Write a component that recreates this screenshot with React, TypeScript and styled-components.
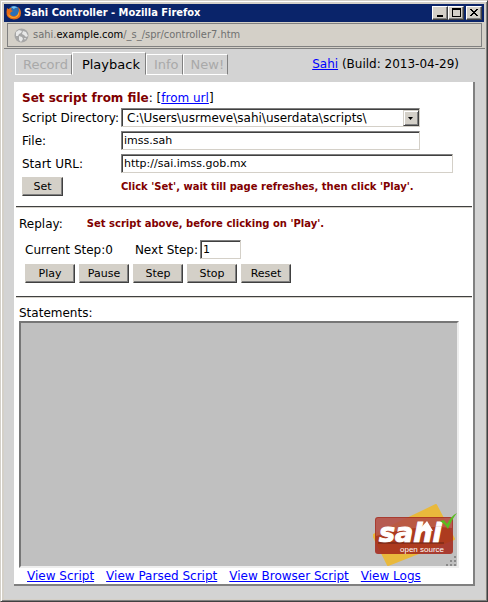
import React from "react";
import styled, { createGlobalStyle } from "styled-components";

const GlobalStyle = createGlobalStyle`
  *, *::before, *::after { box-sizing: border-box; }
  body {
    margin: 0;
    background: #d4d0c8;
    color: #000;
    font: 12px/16px Verdana, "DejaVu Sans", sans-serif;
  }
  button, input, select, textarea { font: inherit; color: inherit; border-radius: 0; }
`;

const WindowFrame = styled.div`
  display: flex;
  flex-direction: column;
  min-height: 100vh;
  padding: 1px;
  background: #d4d0c8;
  border: 1px solid #d4d0c8;
  border-right-color: #404040;
  border-bottom-color: #404040;
  box-shadow: inset 1px 1px #fff, inset -1px -1px #808080;
`;

const TitleBar = styled.header`
  display: flex;
  align-items: center;
  gap: 3px;
  height: 18px;
  margin: 2px 2px 0;
  padding: 0 2px;
  background: #0a246a;
  color: #fff;
`;

const Title = styled.h1`
  flex: 1;
  margin: 0;
  font: bold 11px/18px Tahoma, "DejaVu Sans Condensed", "DejaVu Sans", sans-serif;
  font-stretch: condensed;
  white-space: nowrap;
`;

const WindowButtons = styled.div`
  display: flex;
`;

const WindowButton = styled.button<{ $apart?: boolean }>`
  display: grid;
  place-items: center;
  width: 16px;
  height: 14px;
  margin-left: ${(p) => (p.$apart ? 2 : 0)}px;
  padding: 0;
  background: #d4d0c8;
  border: 1px solid;
  border-color: #fff #404040 #404040 #fff;
  box-shadow: inset -1px -1px #808080;
`;

const AddressBar = styled.div`
  display: flex;
  align-items: center;
  gap: 4px;
  height: 24px;
  margin: 1px 4px 1px 5px;
  padding: 0 6px;
  border: 1px solid #808080;
  color: #707070;
  font: 11px/22px Tahoma, "DejaVu Sans Condensed", "DejaVu Sans", sans-serif;
  font-stretch: condensed;
`;

const Host = styled.span`
  color: #000;
`;

const Page = styled.main`
  display: flex;
  flex: 1;
  flex-direction: column;
  margin: 0 1px 1px 2px;
  padding: 3px 10px 13px;
  background: #d3d3d3;
  border-top: 1px solid #808080;
`;

const TopRow = styled.div`
  display: flex;
  align-items: flex-end;
  justify-content: space-between;
  padding: 0 16px 7px 1px;
`;

const Tabs = styled.nav`
  display: flex;
  align-items: flex-end;
`;

const Tab = styled.button<{ $active?: boolean }>`
  height: ${(p) => (p.$active ? 23 : 21)}px;
  padding: ${(p) => (p.$active ? "2px 5px 0 9px" : "0 3px 0 7px")};
  background: none;
  border: 1px solid #fff;
  border-right-color: #808080;
  border-bottom-color: ${(p) => (p.$active ? "transparent" : "#fff")};
  color: ${(p) => (p.$active ? "#000" : "#a9a9a9")};
  font-size: 13px;
  line-height: 18px;
`;

const Build = styled.p`
  margin: 0 0 1px;
  line-height: 20px;
`;

const Link = styled.a`
  color: #00f;
`;

const Panel = styled.div`
  display: flex;
  flex: 1;
  flex-direction: column;
  padding: 8px 0 0 2px;
  background: #fff;
  border: solid #808080;
  border-width: 0 2px 2px 0;
`;

const ScriptForm = styled.form`
  display: grid;
  grid-template-columns: 99px 1fr;
  row-gap: 4px;
  align-items: center;
  padding: 0 20px 10px 6px;
`;

const Heading = styled.div`
  grid-column: 1 / -1;
  height: 14px;
  line-height: 16px;
`;

const Warning = styled.strong`
  color: #800000;
`;

const Notice = styled.p`
  margin: 0;
  color: #800000;
  font-size: 10px;
  font-weight: bold;
`;

const Field = styled.input<{ $width: string }>`
  width: ${(p) => p.$width};
  height: 19px;
  padding: 0 2px;
  background: #fff;
  border: 1px solid;
  border-color: #808080 #d4d0c8 #d4d0c8 #808080;
  box-shadow: inset 1px 1px #404040;
  font-size: 11px;
  outline: none;
`;

const SelectBox = styled.div`
  position: relative;
  width: 90%;
`;

const Select = styled.select`
  display: block;
  appearance: none;
  width: 100%;
  height: 19px;
  padding: 0 18px 0 5px;
  background: #fff;
  border: 1px solid;
  border-color: #808080 #d4d0c8 #d4d0c8 #808080;
  box-shadow: inset 1px 1px #404040;
`;

const SelectArrow = styled.span`
  position: absolute;
  top: 2px;
  right: 1px;
  bottom: 1px;
  display: grid;
  place-items: center;
  width: 16px;
  background: #d4d0c8;
  border: 1px solid;
  border-color: #d4d0c8 #404040 #404040 #d4d0c8;
  box-shadow: inset 1px 1px #fff, inset -1px -1px #808080;
  pointer-events: none;
`;

const PushButton = styled.button<{ $narrow?: boolean }>`
  width: ${(p) => (p.$narrow ? 41 : 50)}px;
  height: 19px;
  padding: 0;
  background: #d4d0c8;
  border: 1px solid;
  border-color: #d4d0c8 #404040 #404040 #d4d0c8;
  box-shadow: inset -1px -1px #808080;
  font-size: 11px;
  line-height: 16px;
`;

const Rule = styled.hr`
  width: calc(100% - 1px);
  height: 2px;
  margin: 0;
  border: 0;
  border-top: 1px solid #404040;
  border-bottom: 1px solid #d4d0c8;
`;

const Replay = styled.section`
  padding: 8px 3px 13px;
`;

const ReplayHead = styled.div`
  display: flex;
  gap: 24px;
`;

const Steps = styled.div`
  display: flex;
  align-items: center;
  gap: 22px;
  padding: 8px 0 5px 6px;
`;

const StepLabel = styled.label`
  display: flex;
  align-items: center;
  gap: 2px;
`;

const Buttons = styled.div`
  display: flex;
  gap: 4px;
  padding-left: 6px;
`;

const Statements = styled.section`
  display: flex;
  flex: 1;
  flex-direction: column;
  padding: 7px 14px 0 3px;
`;

const StatementsBox = styled.div`
  position: relative;
  display: flex;
  flex: 1;
  min-height: 120px;
`;

const StatementsArea = styled.textarea`
  flex: 1;
  min-width: 0;
  padding: 2px;
  background: #c0c0c0;
  border: 2px solid;
  border-color: #767676 #eee #eee #767676;
  resize: none;
  outline: none;
`;

const LogoPlace = styled.div`
  position: absolute;
  right: 2px;
  bottom: 1px;
  pointer-events: none;
  svg { display: block; }
`;

const Links = styled.nav`
  display: flex;
  gap: 12px;
  padding-left: 8px;
`;

function FirefoxIcon() {
  return (
    <svg width="15" height="16" viewBox="0 0 15 16" aria-hidden="true">
      <circle cx="8" cy="7" r="6" fill="#2b6fb5" />
      <path d="M5 2q4-2 7 1q-3-1-4 1z" fill="#7cc4ee" />
      <path d="M1 3q1 1 2 1q1-1 3-1q-1 1-1 2l2 1q-3 1-3 3q2 3 5 2q4-1 4-6l-1-3q3 2 3 6q0 6-7 6.500Q0 14 .5 7z" fill="#e66b16" />
      <path d="M13 6q1 6-5 7q-5 0-6-4q3 4 7 3q3-1 4-6z" fill="#f8b62d" />
    </svg>
  );
}

function GlobeIcon() {
  return (
    <svg width="15" height="15" viewBox="0 0 15 15" aria-hidden="true">
      <circle cx="7.500" cy="7.500" r="7" fill="#a6a6a6" />
      <path d="M2 4l3-2l3 1l-1 2l-2 1l-1 2H2zM9 3l3 1l2 4l-2 1l-2-2l-2-1zM5 8l3 1l1 2l-2 3l-2-2zM10 10l2 0l-1 2z" fill="#e8e8e8" />
    </svg>
  );
}

function SahiLogo() {
  return (
    <svg width="84" height="64" viewBox="0 0 84 64" role="img" aria-label="sahi open source">
      <path d="M0 32L63 2L81 36L15 62z" fill="#e9b93c" stroke="#e9b93c" strokeWidth="2" strokeLinejoin="round" />
      <rect x="2" y="14" width="78" height="37" rx="3" fill="#a4281b" opacity=".87" />
      <path d="M3 17q0-2 2-2h72q2 0 2 2v8q-36-4-76 8z" fill="#fff" opacity=".16" />
      <path d="M46 27l8-9l6 10z" fill="#fff" />
      <text
        x="6"
        y="39"
        fill="#fff"
        stroke="#fff"
        strokeWidth="1"
        fontFamily="DejaVu Sans, sans-serif"
        fontWeight="bold"
        fontStyle="italic"
        fontSize="27"
      >
        sahi
      </text>
      <path d="M5 40h66" stroke="#3a1511" opacity=".6" />
      <text x="27" y="49" fill="#fff" fontFamily="Liberation Sans, sans-serif" fontSize="8">open source</text>
      <path d="M67 18l4-1l3 4q4-8 10-11q-5 6-9 16q-3-5-8-8z" fill="#58bd20" />
      <path d="M81 53h2v2h-2zM77 57h2v2h-2zM81 57h2v2h-2zM73 61h2v2h-2zM77 61h2v2h-2zM81 61h2v2h-2z" fill="#8a8a8a" />
    </svg>
  );
}

export default function App() {
  return (
    <>
      <GlobalStyle />
      <WindowFrame>
        <TitleBar>
          <FirefoxIcon />
          <Title>Sahi Controller - Mozilla Firefox</Title>
          <WindowButtons>
            <WindowButton aria-label="Minimize">
              <svg width="12" height="10"><path d="M3 7h6v2H3z" /></svg>
            </WindowButton>
            <WindowButton aria-label="Maximize">
              <svg width="12" height="10"><path d="M2 0h9v9H2zM3 2v6h7V2z" fillRule="evenodd" /></svg>
            </WindowButton>
            <WindowButton aria-label="Close" $apart>
              <svg width="12" height="10" shapeRendering="crispEdges">
                <path d="M2 1h2v1h1v1h2v-1h1v-1h2v1h-1v1h-1v1h-1v1h1v1h1v1h1v1h-2v-1h-1v-1h-2v1h-1v1h-2v-1h1v-1h1v-1h1v-1h-1v-1h-1v-1h-1z" />
              </svg>
            </WindowButton>
          </WindowButtons>
        </TitleBar>
        <AddressBar>
          <GlobeIcon />
          <span>sahi.<Host>example.com</Host>/_s_/spr/controller7.htm</span>
        </AddressBar>
        <Page>
          <TopRow>
            <Tabs>
              <Tab>Record</Tab>
              <Tab $active>Playback</Tab>
              <Tab>Info</Tab>
              <Tab>New!</Tab>
            </Tabs>
            <Build><Link href="#sahi">Sahi</Link> (Build: 2013-04-29)</Build>
          </TopRow>
          <Panel>
            <ScriptForm onSubmit={(e) => e.preventDefault()}>
              <Heading>
                <Warning>Set script from file</Warning>: [<Link href="#url">from url</Link>]
              </Heading>
              <label htmlFor="dir">Script Directory:</label>
              <SelectBox>
                <Select id="dir">
                  <option>{"C:\\Users\\usrmeve\\sahi\\userdata\\scripts\\"}</option>
                </Select>
                <SelectArrow>
                  <svg width="5" height="3"><path d="M0 0h5L2.500 3z" /></svg>
                </SelectArrow>
              </SelectBox>
              <label htmlFor="file">File:</label>
              <Field id="file" $width="90%" defaultValue="imss.sah" />
              <label htmlFor="start">Start URL:</label>
              <Field id="start" $width="100%" defaultValue="http://sai.imss.gob.mx" />
              <PushButton $narrow>Set</PushButton>
              <Notice>Click 'Set', wait till page refreshes, then click 'Play'.</Notice>
            </ScriptForm>
            <Rule />
            <Replay>
              <ReplayHead>
                <span>Replay:</span>
                <Notice>Set script above, before clicking on 'Play'.</Notice>
              </ReplayHead>
              <Steps>
                <span>Current Step:0</span>
                <StepLabel>Next Step: <Field $width="41px" defaultValue="1" /></StepLabel>
              </Steps>
              <Buttons>
                <PushButton>Play</PushButton>
                <PushButton>Pause</PushButton>
                <PushButton>Step</PushButton>
                <PushButton>Stop</PushButton>
                <PushButton>Reset</PushButton>
              </Buttons>
            </Replay>
            <Rule />
            <Statements>
              <label htmlFor="statements">Statements:</label>
              <StatementsBox>
                <StatementsArea id="statements" />
                <LogoPlace><SahiLogo /></LogoPlace>
              </StatementsBox>
              <Links>
                <Link href="#script">View Script</Link>
                <Link href="#parsed">View Parsed Script</Link>
                <Link href="#browser">View Browser Script</Link>
                <Link href="#logs">View Logs</Link>
              </Links>
            </Statements>
          </Panel>
        </Page>
      </WindowFrame>
    </>
  );
}
